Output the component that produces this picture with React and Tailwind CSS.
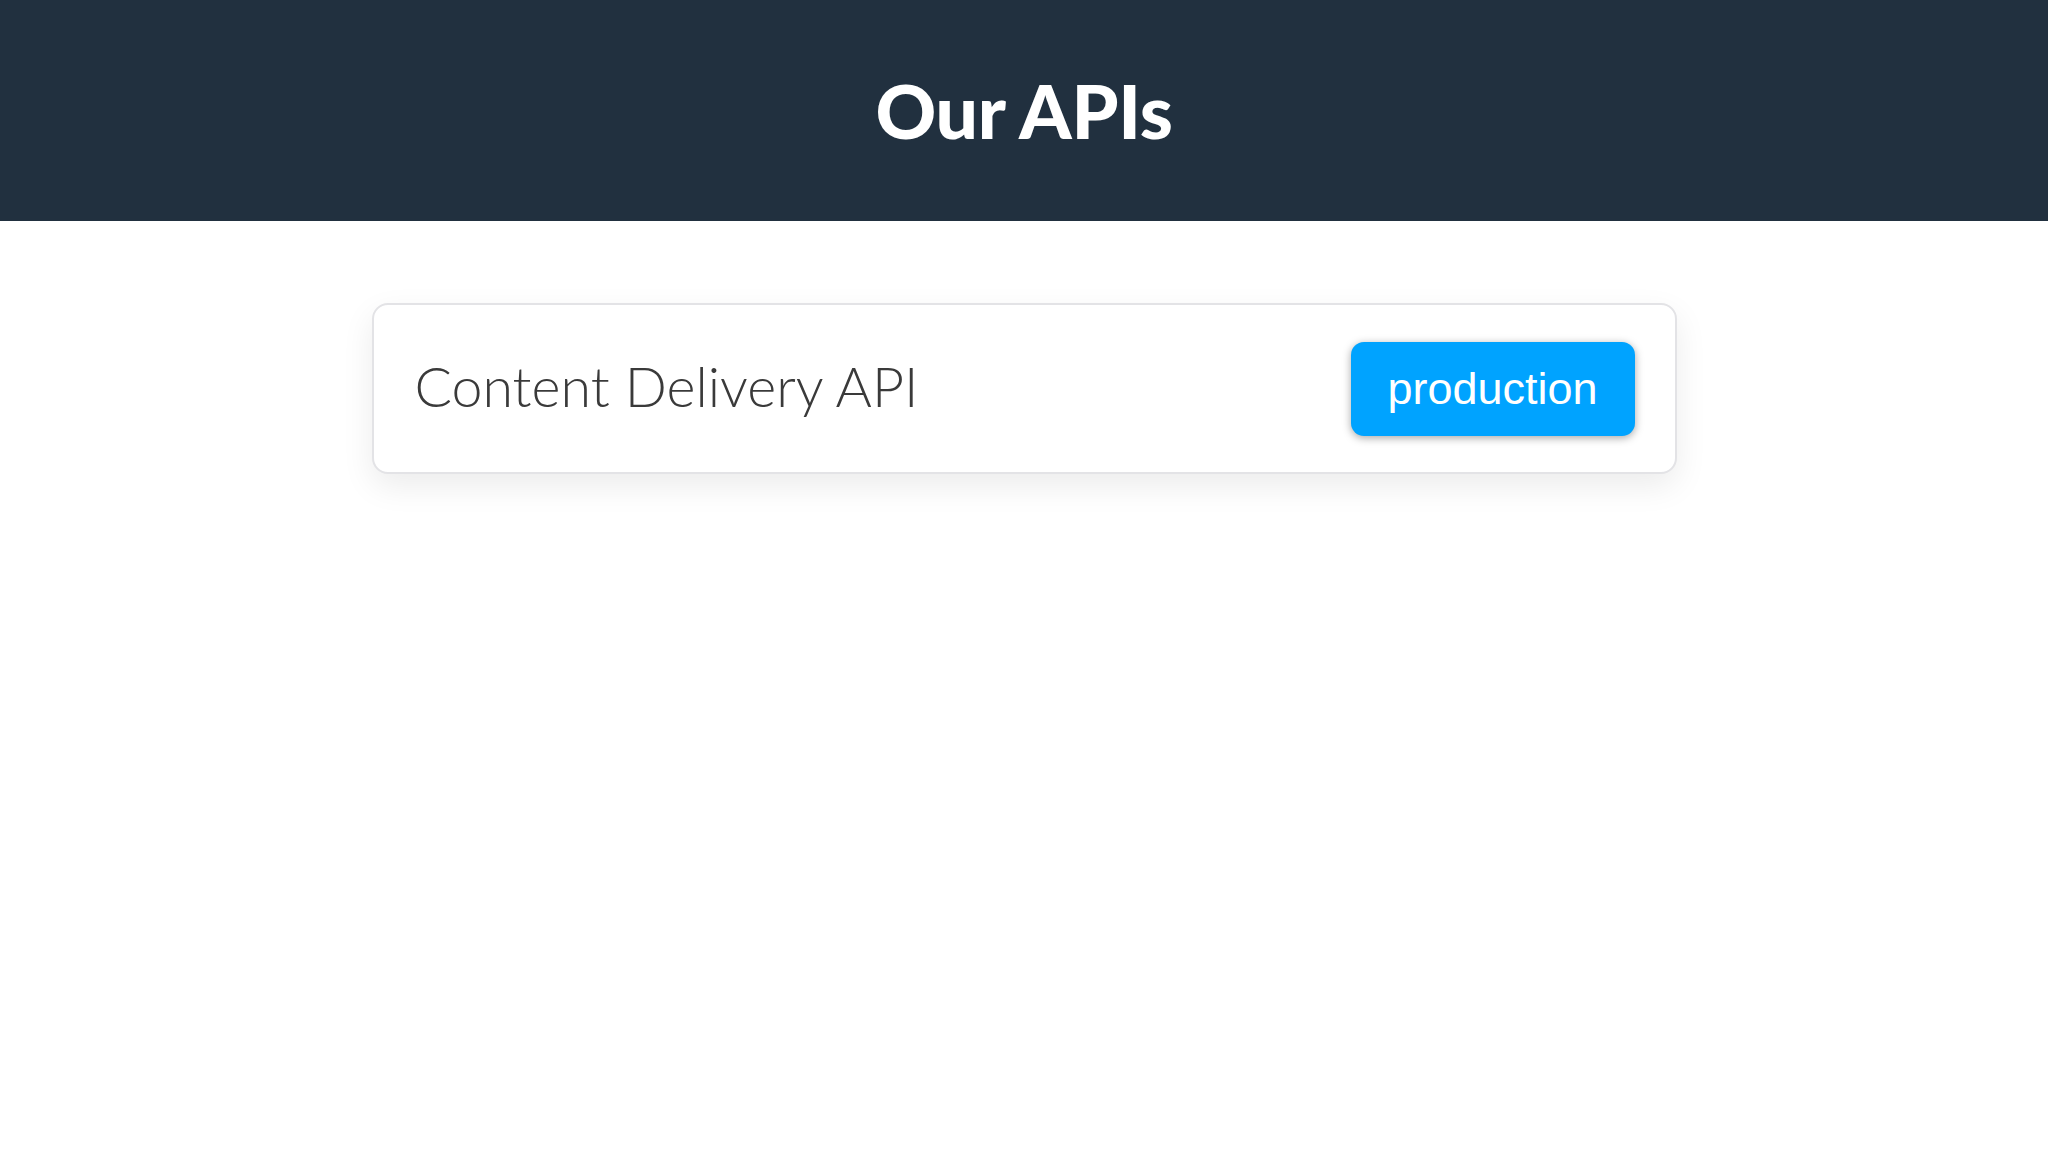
export default function App() {
  return (
    <div className="min-h-screen w-full bg-white" style={{ fontFamily: 'Lato, "Liberation Sans", sans-serif' }}>
      <header className="h-[221px] bg-[#21303f] flex items-center justify-center">
        <h1 className="text-white text-[75px] font-black leading-none tracking-[-0.3px] font-['Lato',sans-serif]">Our APIs</h1>
      </header>
      <main className="flex justify-center pt-[82px]">
        <div className="w-[1305px] h-[171px] rounded-[16px] border-2 border-[#e3e3e6] bg-white shadow-[0_12px_32px_rgba(0,0,0,0.08)] flex items-center justify-between pl-[41px] pr-[40px]">
          <span className="mb-[6px] text-[55.5px] font-light text-[#3a3a3a] leading-none font-['Lato',sans-serif]">Content Delivery API</span>
          <button className="w-[284px] h-[94px] rounded-[13px] bg-[#00a3ff] text-white text-[45px] leading-none shadow-[0_2px_8px_rgba(0,0,0,0.35)] font-['Liberation_Sans',Arial,sans-serif]">production</button>
        </div>
      </main>
    </div>
  );
}
